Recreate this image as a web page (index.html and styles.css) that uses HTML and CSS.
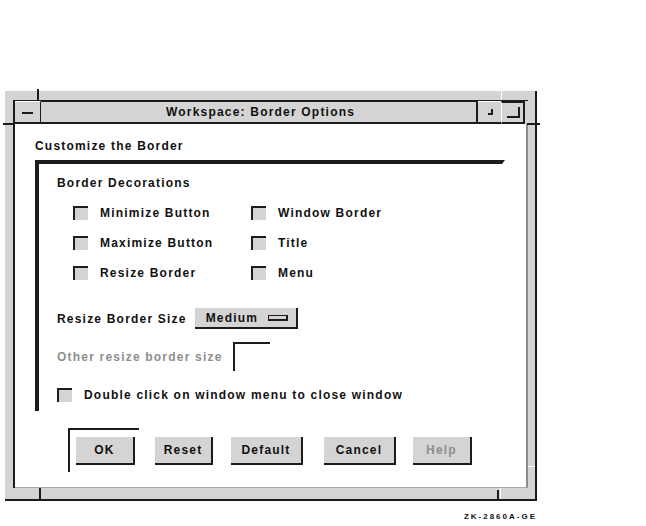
FILE: index.html
```html
<!DOCTYPE html>
<html lang="en">
<head>
  <meta charset="UTF-8"/>
  <title>Workspace: Border Options</title>
  <link rel="stylesheet" href="styles.css">
</head>
<body>
  <div class="screen">
    <div class="window">
      <!-- frame corner marks -->
      <span class="tick tick-tl-v"></span>
      <span class="tick tick-tl-h"></span>
      <span class="tick tick-tr-h"></span>
      <span class="tick light tick-tr-v"></span>
      <span class="tick tick-bl-v"></span>
      <span class="tick tick-br-v"></span>
      <span class="tick light tick-br-w"></span>
      <span class="tick light tick-r-w"></span>

      <div class="inner">
        <div class="titlebar">
          <div class="tb-btn tb-menu"><span class="dash"></span></div>
          <div class="tb-title">Workspace: Border Options</div>
          <div class="tb-btn tb-min"><span class="corner small"></span></div>
          <div class="tb-btn tb-max"><span class="corner big"></span></div>
          <div class="tb-gap"></div>
        </div>

        <div class="content">
          <div class="heading">Customize the Border</div>

          <div class="group">
            <div class="group-title">Border Decorations</div>
            <div class="checks">
              <label class="check"><span class="box"></span>Minimize Button</label>
              <label class="check"><span class="box"></span>Window Border</label>
              <label class="check"><span class="box"></span>Maximize Button</label>
              <label class="check"><span class="box"></span>Title</label>
              <label class="check"><span class="box"></span>Resize Border</label>
              <label class="check"><span class="box"></span>Menu</label>
            </div>

            <div class="row size-row">
              <span>Resize Border Size</span>
              <div class="option">Medium<span class="option-mark"></span></div>
            </div>

            <div class="row other-row">
              <span class="dim">Other resize border size</span>
              <div class="field"></div>
            </div>

            <label class="check dbl"><span class="box"></span>Double click on window menu to close window</label>
          </div>

          <div class="actions">
            <div class="default-ring"><div class="btn">OK</div></div>
            <div class="btn btn-reset">Reset</div>
            <div class="btn btn-default">Default</div>
            <div class="btn btn-cancel">Cancel</div>
            <div class="btn btn-help dim">Help</div>
          </div>
        </div>
      </div>
    </div>
    <div class="figure-id">ZK-2860A-GE</div>
  </div>
</body>
</html>
```

FILE: styles.css
```css
* { box-sizing: border-box; }
body { margin: 0; background: #fff; font-family: "Liberation Sans", Arial, sans-serif; font-weight: bold; font-size: 12px; letter-spacing: 1.2px; color: #111; }

.screen { padding: 91px 0 0 5px; width: 646px; height: 526px; }

.window { position: relative; width: 532px; height: 410px; background: #d4d4d4; border-right: 2px solid #1c1c1c; border-bottom: 2px solid #1c1c1c; padding: 9px 7px 11px 8px; }

.tick { position: absolute; background: #1c1c1c; }
.tick.light { background: #fff; }
.tick-tl-v { left: 32px; top: -2px; width: 2px; height: 11px; }
.tick-tl-h { left: -2px; top: 32px; width: 10px; height: 2px; }
.tick-tr-h { left: 522px; top: 32px; width: 13px; height: 2px; }
.tick-tr-v { left: 496px; top: 0; width: 1px; height: 9px; }
.tick-bl-v { left: 34px; top: 397px; width: 2px; height: 11px; }
.tick-br-v { left: 492px; top: 399px; width: 2px; height: 9px; }
.tick-br-w { left: 495px; top: 397px; width: 1px; height: 11px; }
.tick-r-w { left: 523px; top: 375px; width: 7px; height: 1px; }

.inner { height: 100%; border-left: 2px solid #1c1c1c; border-top: 1px solid #1c1c1c; display: flex; flex-direction: column; }

.titlebar { display: flex; height: 23px; flex: none; }
.tb-btn { display: flex; align-items: center; justify-content: center; border-bottom: 2px solid #1c1c1c; }
.tb-menu { width: 26px; border-right: 1px solid #1c1c1c; border-top: 1px solid #fff; }
.tb-title { flex: 1; text-align: center; line-height: 21px; border-top: 1px solid #1c1c1c; border-bottom: 2px solid #1c1c1c; border-right: 2px solid #1c1c1c; padding-left: 4px; }
.tb-min { width: 23px; border-top: 1px solid #fff; }
.tb-max { width: 24px; border-top: 2px solid #1c1c1c; border-left: 1px solid #fff; border-right: 2px solid #1c1c1c; }
.tb-gap { width: 3px; }

.dash { width: 11px; height: 2px; background: #1c1c1c; margin-top: 2px; }
.corner { border-right: 2px solid #1c1c1c; border-bottom: 2px solid #1c1c1c; }
.corner.small { width: 5px; height: 6px; margin-left: 2px; }
.corner.big { width: 13px; height: 11px; margin-left: 1px; }

.content { flex: 1; background: #fff; border-right: 2px solid #8c8c8c; border-bottom: 1px solid #a8a8a8; padding: 15px 0 0 20px; }
.heading { line-height: 14px; }

.group { position: relative; width: 467px; margin-top: 7px; border-top: 4px solid #1c1c1c; border-left: 4px solid #1c1c1c; padding: 12px 0 9px 18px; }
.group::after { content: ""; position: absolute; right: -3px; top: -4px; border-left: 3px solid #1c1c1c; border-bottom: 4px solid transparent; }
.group-title { line-height: 14px; }

.checks { display: grid; grid-template-columns: 178px 150px; grid-auto-rows: 30px; margin: 8px 0 0 16px; }
.check { display: flex; align-items: center; gap: 12px; }
.box { width: 15px; height: 14px; background: #d4d4d4; border-top: 2px solid #1c1c1c; border-left: 2px solid #1c1c1c; flex: none; }

.row { display: flex; align-items: center; }
.size-row { margin-top: 20px; gap: 8px; }
.option { width: 103px; height: 21px; background: #d4d4d4; border-right: 2px solid #1c1c1c; border-bottom: 2px solid #1c1c1c; display: flex; align-items: center; padding-left: 11px; }
.option-mark { width: 20px; height: 6px; margin-left: auto; margin-right: 8px; border: 1px solid #1c1c1c; border-bottom-width: 2px; border-right-width: 2px; }

.other-row { margin-top: 13px; gap: 10px; }
.dim { color: #8e8e8e; }
.field { width: 37px; height: 29px; border-top: 2px solid #1c1c1c; border-left: 2px solid #1c1c1c; }

.dbl { margin-top: 16px; height: 15px; }

.actions { display: flex; align-items: flex-start; margin: 17px 0 0 33px; }
.default-ring { width: 71px; height: 44px; border-top: 2px solid #1c1c1c; border-left: 2px solid #1c1c1c; padding: 7px 4px 0 6px; }
.btn { width: 59px; height: 28px; background: #d4d4d4; border-right: 2px solid #1c1c1c; border-bottom: 2px solid #1c1c1c; display: flex; align-items: center; justify-content: center; }
.actions > .btn { margin-top: 9px; }
.btn-reset { width: 58px; margin-left: 16px; }
.btn-default { width: 72px; margin-left: 18px; }
.btn-cancel { width: 72px; margin-left: 21px; }
.btn-help { width: 59px; margin-left: 17px; }

.figure-id { width: 532px; text-align: right; font-size: 8px; letter-spacing: 2px; margin-top: 11px; }
```
